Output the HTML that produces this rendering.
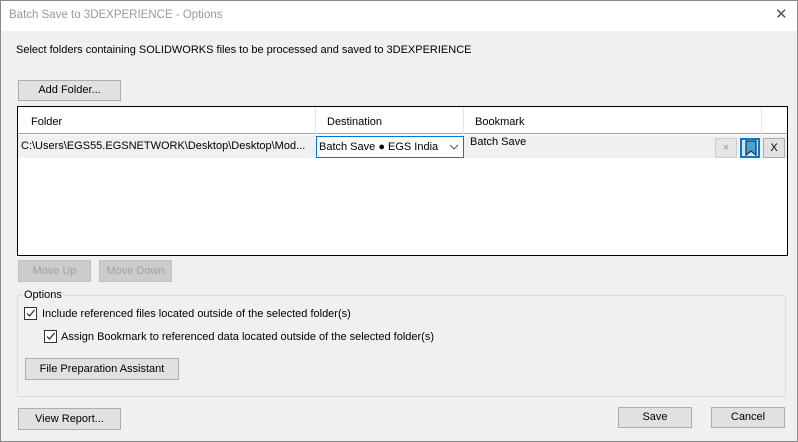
<!DOCTYPE html>
<html><head><style>
*{box-sizing:border-box;margin:0;padding:0}
body{width:798px;height:442px;background:#f0f0f0;font-family:"Liberation Sans",sans-serif;font-size:11px;color:#000;position:relative;overflow:hidden;box-shadow:inset 0 0 0 1px #888}
.a{position:absolute;white-space:nowrap}
.btn{position:absolute;background:#e1e1e1;border:1px solid #adadad;text-align:center;line-height:20px;font-size:11px}
.dis{color:#a0a0a0;background:#ccc;border-color:#bfbfbf}
.cb{position:absolute;width:13px;height:13px;border:1px solid #333;background:#fff}
</style></head><body>
<div class="a" style="left:1px;top:1px;width:796px;height:30px;background:#fff"></div>
<div class="a" style="left:9px;top:9px;color:#999;font-size:11.5px">Batch Save to 3DEXPERIENCE - Options</div>
<div class="a" style="left:775px;top:5px;color:#555;font-size:15px">✕</div>
<div class="a" style="left:16px;top:44px">Select folders containing SOLIDWORKS files to be processed and saved to 3DEXPERIENCE</div>
<div class="btn" style="left:18px;top:80px;width:103px;height:21px;line-height:19px">Add Folder...</div>
<div class="a" style="left:17px;top:106px;width:771px;height:150px;border:1px solid #000;background:#fff">
 <div class="a" style="left:0;top:0;width:769px;height:27px;border-bottom:1px solid #a0a0a0"></div>
 <div class="a" style="left:297px;top:0;height:27px;border-left:1px solid #e5e5e5"></div>
 <div class="a" style="left:445px;top:0;height:27px;border-left:1px solid #e5e5e5"></div>
 <div class="a" style="left:743px;top:0;height:27px;border-left:1px solid #e5e5e5"></div>
 <div class="a" style="left:13px;top:9px">Folder</div>
 <div class="a" style="left:309px;top:9px">Destination</div>
 <div class="a" style="left:457px;top:9px">Bookmark</div>
 <div class="a" style="left:0;top:28px;width:769px;height:24px;background:#f0f0f0;border-bottom:1px solid #fff"></div>
 <div class="a" style="left:3px;top:33px">C:\Users\EGS55.EGSNETWORK\Desktop\Desktop\Mod...</div>
 <div class="a" style="left:298px;top:29px;width:148px;height:22px;border:1px solid #0078d7;background:#fff"><span class="a" style="left:2px;top:4px">Batch Save ● EGS India</span><svg class="a" style="left:132px;top:7px" width="10" height="7"><path d="M1 1l4 4 4-4" fill="none" stroke="#555"/></svg></div>
 <div class="a" style="left:452px;top:29px">Batch Save</div>
 <div class="a" style="left:697px;top:31px;width:22px;height:20px;border:1px solid #ccc;background:#e6e6e6;color:#999;text-align:center;line-height:18px">×</div>
 <div class="a" style="left:722px;top:31px;width:20px;height:20px;border:2px solid #0078d7;background:#cce4f7"><svg width="16" height="16" style="position:absolute;left:1px;top:0"><path d="M3 1h10v14l-5-4-5 4z" fill="#4aa0d8" stroke="#134" stroke-width="1.2"/></svg></div>
 <div class="a" style="left:745px;top:31px;width:22px;height:20px;border:1px solid #adadad;background:#e1e1e1;text-align:center;line-height:18px">X</div>
</div>
<div class="btn dis" style="left:18px;top:260px;width:73px;height:22px">Move Up</div>
<div class="btn dis" style="left:99px;top:260px;width:73px;height:22px">Move Down</div>
<div class="a" style="left:17px;top:295px;width:769px;height:102px;border:1px solid #dcdcdc"></div>
<div class="a" style="left:22px;top:289px;background:#f0f0f0;padding:0 2px">Options</div>
<div class="cb" style="left:24px;top:307px"><svg width="11" height="11" style="position:absolute;left:0;top:0"><path d="M2 5.5l2.5 2.5 5-6" fill="none" stroke="#222" stroke-width="1.2"/></svg></div>
<div class="a" style="left:42px;top:308px">Include referenced files located outside of the selected folder(s)</div>
<div class="cb" style="left:44px;top:330px"><svg width="11" height="11" style="position:absolute;left:0;top:0"><path d="M2 5.5l2.5 2.5 5-6" fill="none" stroke="#222" stroke-width="1.2"/></svg></div>
<div class="a" style="left:61px;top:331px">Assign Bookmark to referenced data located outside of the selected folder(s)</div>
<div class="btn" style="left:25px;top:358px;width:154px;height:22px">File Preparation Assistant</div>
<div class="btn" style="left:18px;top:408px;width:103px;height:22px">View Report...</div>
<div class="btn" style="left:618px;top:407px;width:74px;height:21px;line-height:19px">Save</div>
<div class="btn" style="left:711px;top:407px;width:74px;height:21px;line-height:19px">Cancel</div>
</body></html>
